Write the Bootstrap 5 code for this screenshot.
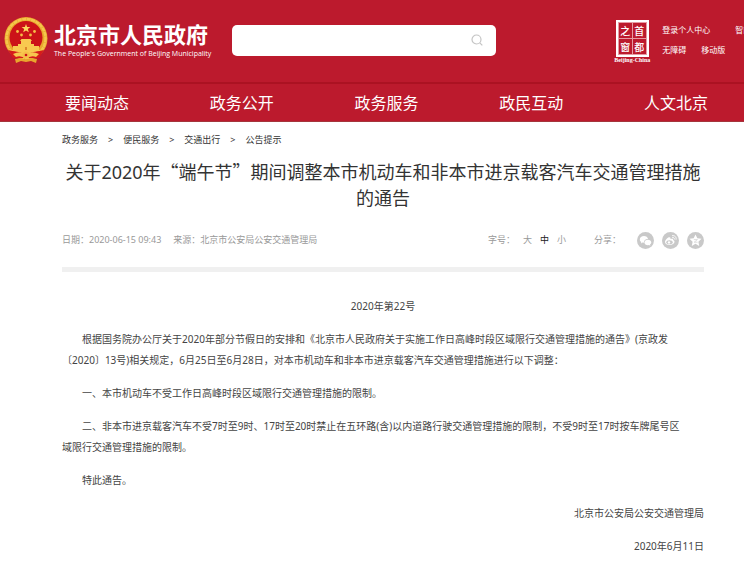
<!DOCTYPE html>
<html lang="zh-CN">
<head>
<meta charset="utf-8">
<meta name="viewport" content="width=device-width, initial-scale=1">
<title>北京市人民政府</title>
<link href="https://cdn.jsdelivr.net/npm/bootstrap@5.3.0/dist/css/bootstrap.min.css" rel="stylesheet">
<style>
body { font-family: "Noto Sans", "Noto Sans CJK SC", sans-serif; font-size: 10px; color: #444; background: #fff; overflow-x: hidden; }
a { color: inherit; text-decoration: none; }
.cjk { font-family: "Noto Sans CJK SC", sans-serif; }
.site-head { background: #bc1a2d; height: 84px; border-bottom: 2px solid #ab1222; color: #fff; padding: 0 0 2px 4px; overflow: hidden; }
.emblem { width: 44px; height: 46px; }
.site-name { font-size: 22px; line-height: 28px; font-weight: 700; }
.site-sub { font-family: "Open Sans", sans-serif; font-size: 7px; line-height: 14px; }
.site-names { margin-left: 6px; }
.search-box { width: 264px; height: 31px; margin-left: 21px; }
.search-box input { height: 31px; border: 0; border-radius: 5px; font-size: 12px; padding-right: 32px; }
.search-box button { width: 38px; color: #c4c4c4; }
.seal { width: 36px; margin-left: 118px; padding-top: 4px; }
.seal-grid { display: grid; grid-template-columns: 1fr 1fr; gap: 1px; width: 33px; padding: 1px; border: 2px solid #fff; background: #e79aa2; }
.seal-grid span { background: #bc1a2d; font-size: 10px; line-height: 15px; font-weight: 500; text-align: center; }
.seal-name { font-family: "Liberation Serif", serif; font-size: 6px; line-height: 7px; font-weight: 700; }
.quick { font-size: 8px; line-height: 20px; margin-left: 12px; }
.quick-row { gap: 15px; }
.quick-top { gap: 25px; }
.main-nav { background: #bc1a2d; height: 38px; border-bottom: 1px solid #a5353c; padding: 0 36px 1px 65px; font-size: 16px; color: #fff; }
.page-body { padding: 0 40px 0 62px; }
.crumbs { font-size: 9px; line-height: 14px; padding-top: 11px; gap: 10px; color: #333; }
.doc-title { font-size: 18px; line-height: 26px; font-weight: 400; color: #333; margin: 11px 0 0; }
.doc-meta { font-size: 9px; line-height: 18px; color: #999; margin-top: 20px; padding-bottom: 18px; border-bottom: 5px solid #f0f0f0; }
.size-btn { border: 0; padding: 0; background: none; color: inherit; width: 17px; text-align: center; }
.size-btn.is-on { color: #222; }
.share svg { width: 17px; height: 17px; display: block; }
.doc-text { line-height: 21px; padding-top: 24px; }
.doc-text p { margin-bottom: 12px; }
.doc-text .ind { text-indent: 20px; }
</style>
<script src="https://cdn.jsdelivr.net/npm/bootstrap@5.3.0/dist/js/bootstrap.bundle.min.js"></script>
</head>
<body>
<header class="site-head d-flex align-items-center">
  <a href="#" class="d-flex align-items-center flex-shrink-0" aria-label="北京市人民政府">
    <svg class="emblem flex-shrink-0" viewBox="0 0 44 46" aria-hidden="true">
      <circle cx="22" cy="21.500" r="21.500" fill="#e9a62d"/>
      <circle cx="22" cy="21.500" r="19.500" fill="none" stroke="#f4c64c" stroke-width="2.500" stroke-dasharray="4 .6"/>
      <circle cx="22" cy="20.500" r="16.500" fill="#cc1218"/>
      <path d="M22 7l1.100 3.100h3.300l-2.600 2 1 3.200-2.800-1.900-2.800 1.900 1-3.200-2.600-2h3.300z" fill="#fbd85f"/>
      <g fill="#f5bd47"><circle cx="13.500" cy="14.500" r="1.400"/><circle cx="30.500" cy="14.500" r="1.400"/><circle cx="17.500" cy="18" r="1.400"/><circle cx="26.500" cy="18" r="1.400"/></g>
      <path d="M16 24l1.500-2h9l1.500 2zM17 24h10v3H17zM14 27h16v2H14zM9 29h26v4H9zM7 33h30l-3 3H10z" fill="#f8c950"/>
      <path d="M21 30h2v3h-2z" fill="#dd8a2c"/>
      <path d="M4 33c6 2 12 1 15 4h6c3-3 9-2 15-4l-5 8H9z" fill="#d61b1b"/>
      <path d="M9 37q8-4 13 1 5-5 13-1l-3 3q-5-2-10 2-5-4-10-2z" fill="#f7c74e"/>
      <circle cx="22" cy="38" r="3.500" fill="#f5bd47"/><circle cx="22" cy="38" r="1.300" fill="#cc1218"/>
      <path d="M11 42l6-1 5 2 5-2 6 1-1 4-5-2-5 1-5-1-5 2z" fill="#e9a62d"/>
    </svg>
    <span class="d-block site-names text-nowrap">
      <span class="d-block site-name cjk">北京市人民政府</span>
      <span class="d-block site-sub">The People's Government of Beijing Municipality</span>
    </span>
  </a>
  <form class="search-box position-relative flex-shrink-0" role="search">
    <input class="form-control" type="text" aria-label="搜索">
    <button class="btn p-0 border-0 position-absolute top-0 end-0 h-100" type="button" aria-label="搜索">
      <svg class="d-block m-auto" width="12" height="12" viewBox="0 0 12 12" fill="none" stroke="currentColor" stroke-width="1.200"><circle cx="5.500" cy="5.500" r="4.500"/><path d="M8.800 8.800l2.500 2.500"/></svg>
    </button>
  </form>
  <a href="#" class="seal flex-shrink-0 d-flex flex-column align-items-center text-nowrap" aria-label="首都之窗">
    <span class="seal-grid cjk"><span>之</span><span>首</span><span>窗</span><span>都</span></span>
    <span class="seal-name">Beijing-China</span>
  </a>
  <div class="quick flex-shrink-0 text-nowrap cjk">
    <div class="d-flex quick-top"><a href="#">登录个人中心</a><a href="#">智能问答</a></div>
    <div class="d-flex quick-row"><a href="#">无障碍</a><a href="#">移动版</a></div>
  </div>
</header>
<nav class="main-nav d-flex align-items-center justify-content-between text-nowrap cjk" aria-label="主导航">
  <a href="#">要闻动态</a><a href="#">政务公开</a><a href="#">政务服务</a><a href="#">政民互动</a><a href="#">人文北京</a>
</nav>
<main class="page-body">
  <nav class="crumbs d-flex" aria-label="位置">
    <a href="#">政务服务</a><span>&gt;</span><a href="#">便民服务</a><span>&gt;</span><a href="#">交通出行</a><span>&gt;</span><a href="#">公告提示</a>
  </nav>
  <h1 class="doc-title text-center">关于2020年<span class="cjk">“</span>端午节<span class="cjk">”</span>期间调整本市机动车和非本市进京载客汽车交通管理措施的通告</h1>
  <div class="doc-meta d-flex align-items-center text-nowrap">
    <span>日期：2020-06-15 09:43</span>
    <span class="ms-2 me-auto ps-1">来源：北京市公安局公安交通管理局</span>
    <span class="me-1">字号：</span>
    <button class="size-btn" type="button">大</button><button class="size-btn is-on" type="button">中</button><button class="size-btn" type="button">小</button>
    <span class="ms-4">分享：</span>
    <span class="share d-flex gap-2 ms-3">
      <a href="#" aria-label="微信"><svg viewBox="0 0 17 17"><circle cx="8.500" cy="8.500" r="8.500" fill="#c9c9c9"/><path d="M7 4C4.500 4 2.800 5.500 2.800 7.400c0 1.100.6 2 1.500 2.600l-.4 1.400 1.600-.8 1.300.2C6.700 8.500 8.700 7 11 7.100 10.700 5.300 9.100 4 7 4z" fill="#fff"/><path d="M10.900 7.800c-2 0-3.500 1.200-3.500 2.700s1.500 2.700 3.500 2.700l1.100-.2 1.300.7-.3-1.200c.8-.5 1.300-1.200 1.300-2 0-1.500-1.500-2.700-3.400-2.700z" fill="#fff"/></svg></a>
      <a href="#" aria-label="微博"><svg viewBox="0 0 17 17"><circle cx="8.500" cy="8.500" r="8.500" fill="#c9c9c9"/><path d="M7.500 5.200C5.500 5.200 3 8 3 10c0 1.900 2.200 3 4.500 3 2.900 0 5-1.600 5-3.200 0-1-.8-1.500-1.500-1.700.5-1.200-.4-1.800-2.600-1 .4-1.200 0-1.900-.9-1.900z" fill="#fff"/><ellipse cx="7.500" cy="10.300" rx="3.200" ry="2" fill="#c9c9c9"/><circle cx="7" cy="10.400" r="1.200" fill="#fff"/><path d="M10 3.700c2.700-.6 4.700 1.500 4 4M10.200 5.500c1.500-.3 2.500.7 2.100 2" fill="none" stroke="#fff" stroke-width=".9"/></svg></a>
      <a href="#" aria-label="QQ空间"><svg viewBox="0 0 17 17"><circle cx="8.500" cy="8.500" r="8.500" fill="#c9c9c9"/><path d="M8.500 2.400l1.800 3.900 4.200.5-3.100 2.900.8 4.200-3.700-2.100-3.700 2.100.8-4.200-3.100-2.900 4.200-.5z" fill="#fff"/><path d="M6.800 7.600h3.600L7.200 10.200h3.400" fill="none" stroke="#c9c9c9" stroke-width=".6"/></svg></a>
    </span>
  </div>
  <article class="doc-text">
    <p class="text-center">2020年第22号</p>
    <p class="ind">根据国务院办公厅关于2020年部分节假日的安排和《北京市人民政府关于实施工作日高峰时段区域限行交通管理措施的通告》(京政发<br>〔2020〕13号)相关规定，6月25日至6月28日，对本市机动车和非本市进京载客汽车交通管理措施进行以下调整：</p>
    <p class="ind">一、本市机动车不受工作日高峰时段区域限行交通管理措施的限制。</p>
    <p class="ind">二、非本市进京载客汽车不受7时至9时、17时至20时禁止在五环路(含)以内道路行驶交通管理措施的限制，不受9时至17时按车牌尾号区<br>域限行交通管理措施的限制。</p>
    <p class="ind">特此通告。</p>
    <p class="text-end">北京市公安局公安交通管理局</p>
    <p class="text-end mb-0">2020年6月11日</p>
  </article>
</main>
</body>
</html>
